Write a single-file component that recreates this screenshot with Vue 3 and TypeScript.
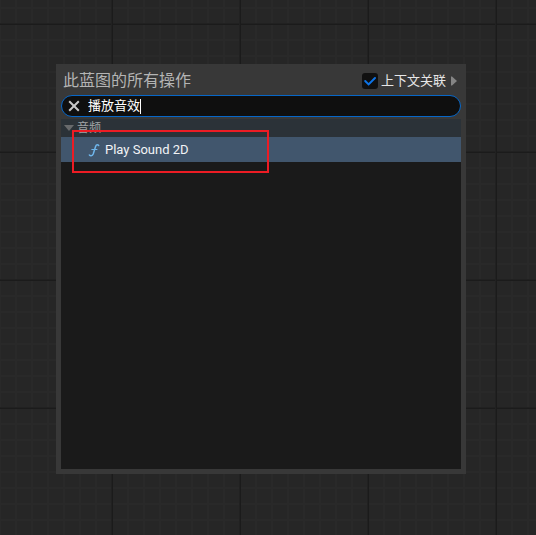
<script setup lang="ts">
import { ref } from 'vue'

interface Action {
  id: string
  label: string
}

interface Category {
  name: string
  actions: Action[]
}

const query = ref<string>('播放音效')
const contextSensitive = ref<boolean>(true)
const expanded = ref<boolean>(true)
const selected = ref<string>('play-sound-2d')
const categories: Category[] = [
  { name: '音频', actions: [{ id: 'play-sound-2d', label: 'Play Sound 2D' }] },
]
</script>

<template>
  <main class="graph">
    <section class="menu" aria-labelledby="menu-title">
      <header class="head">
        <h1 id="menu-title" class="title">此蓝图的所有操作</h1>
        <label class="context">
          <span class="box">
            <input v-model="contextSensitive" class="check" type="checkbox" />
            <svg v-if="contextSensitive" class="tick" viewBox="0 0 16 16" aria-hidden="true">
              <path d="M3.2 8 L6.6 11.4 L13 5" />
            </svg>
          </span>
          <span>上下文关联</span>
        </label>
        <button class="more" type="button" aria-label="展开">
          <svg viewBox="0 0 6 10" aria-hidden="true"><path d="M0 0.5 H1 L6 5 L1 9.5 H0 Z" /></svg>
        </button>
      </header>

      <div class="search">
        <button class="clear" type="button" aria-label="清除" @click="query = ''">
          <svg viewBox="0 0 12 12" aria-hidden="true"><path d="M1.2 1.2 L10.8 10.8 M10.8 1.2 L1.2 10.8" /></svg>
        </button>
        <input v-model="query" class="query" type="text" aria-label="搜索" />
        <span class="caret"></span>
      </div>

      <div class="list">
        <div v-for="category in categories" :key="category.name">
          <button class="category" type="button" :aria-expanded="expanded" @click="expanded = !expanded">
            <svg class="arrow" viewBox="0 0 10 6" aria-hidden="true"><path d="M0 0 H10 L5 6 Z" /></svg>
            <span>{{ category.name }}</span>
          </button>
          <template v-if="expanded">
            <button
              v-for="action in category.actions"
              :key="action.id"
              class="action"
              :class="{ active: selected === action.id }"
              type="button"
              @click="selected = action.id"
            >
              <svg class="func" viewBox="0 0 12 14" aria-hidden="true">
                <path d="M10.8 3.2 C10.6 1.4 8.3 1.2 7.6 3.4 L5.2 11 C4.4 13.2 1.8 13.4 1.1 11.6" />
                <path class="bar" d="M3.4 6.5 H9.4" />
              </svg>
              <span>{{ action.label }}</span>
            </button>
          </template>
        </div>
        <div class="highlight"></div>
      </div>
    </section>
  </main>
</template>

<style>
body {
  background: #262626;
}
</style>

<style scoped>
.graph {
  box-sizing: border-box;
  display: flex;
  min-height: 100vh;
  padding: 64px 70px 61px 56px;
  font-family: Roboto, "Noto Sans CJK SC", sans-serif;
  background-color: #262626;
  background-image:
    linear-gradient(90deg, #212121 1px, #1b1b1b 1px, #1b1b1b 2px, transparent 2px),
    linear-gradient(#212121 1px, #1b1b1b 1px, #1b1b1b 2px, transparent 2px),
    linear-gradient(90deg, #292929 2px, transparent 2px),
    linear-gradient(#292929 2px, transparent 2px);
  background-size: 128px 128px, 128px 128px, 16px 16px, 16px 16px;
  background-position: 111px 0, 0 23px, 15px 0, 0 7px;
}

button {
  margin: 0;
  padding: 0;
  border: 0;
  background: none;
  font: inherit;
  color: inherit;
}

svg {
  display: block;
}

.menu {
  box-sizing: border-box;
  display: flex;
  flex: 1;
  flex-direction: column;
  min-width: 0;
  padding: 0 5px 5px;
  background: #383838;
}

.head {
  box-sizing: border-box;
  display: flex;
  align-items: center;
  height: 31px;
  padding: 2px 4px 0 2px;
}

.title {
  flex: 1;
  margin: 0;
  font-size: 16px;
  font-weight: 400;
  line-height: 24px;
  color: #b4b4b4;
}

.context {
  display: flex;
  align-items: center;
  gap: 3px;
  font-size: 13px;
  line-height: 20px;
  color: #e6e6e6;
}

.box {
  display: grid;
}

.check,
.tick {
  grid-area: 1 / 1;
  width: 16px;
  height: 16px;
}

.check {
  margin: 0;
  border-radius: 3px;
  background: #101010;
  appearance: none;
}

.tick {
  fill: none;
  stroke: #0d74e7;
  stroke-width: 2;
  stroke-linecap: round;
  pointer-events: none;
}

.more {
  margin-left: 5px;
}

.more svg {
  width: 6px;
  height: 10px;
  fill: #858585;
}

.search {
  box-sizing: border-box;
  display: flex;
  align-items: center;
  height: 22px;
  padding: 0 6px;
  border: 1px solid #0767c8;
  border-radius: 11px;
  background: #0f0f0f;
}

.clear svg {
  width: 12px;
  height: 12px;
  fill: none;
  stroke: #c8c8c8;
  stroke-width: 2;
}

.query {
  field-sizing: content;
  margin: 0 0 0 8px;
  padding: 0;
  border: 0;
  outline: 0;
  background: none;
  font: inherit;
  font-size: 13px;
  line-height: 20px;
  color: #ffffff;
  caret-color: transparent;
}

.caret {
  width: 1px;
  height: 15px;
  background: #ffffff;
}

.list {
  position: relative;
  flex: 1;
  margin-top: 2px;
  background: #1a1a1a;
}

.category {
  display: flex;
  align-items: center;
  gap: 3px;
  width: 100%;
  height: 18px;
  padding: 0 3px;
  background: #2b3238;
  font-size: 12px;
  line-height: 18px;
  color: #a0a3a5;
}

.arrow {
  width: 10px;
  height: 6px;
  fill: #686a6c;
}

.action {
  display: flex;
  align-items: center;
  gap: 5px;
  width: 100%;
  height: 25px;
  padding: 0 27px;
  font-size: 13px;
  line-height: 24px;
  color: #f2f4f6;
}

.active {
  background: #41566d;
}

.func {
  width: 12px;
  height: 14px;
  fill: none;
  stroke: #6fb6ec;
  stroke-width: 1.5;
}

.bar {
  stroke-width: 1;
}

.highlight {
  position: absolute;
  top: 11px;
  left: 11px;
  box-sizing: border-box;
  width: 197px;
  height: 43px;
  border: 2px solid #ed1c24;
  pointer-events: none;
}
</style>
